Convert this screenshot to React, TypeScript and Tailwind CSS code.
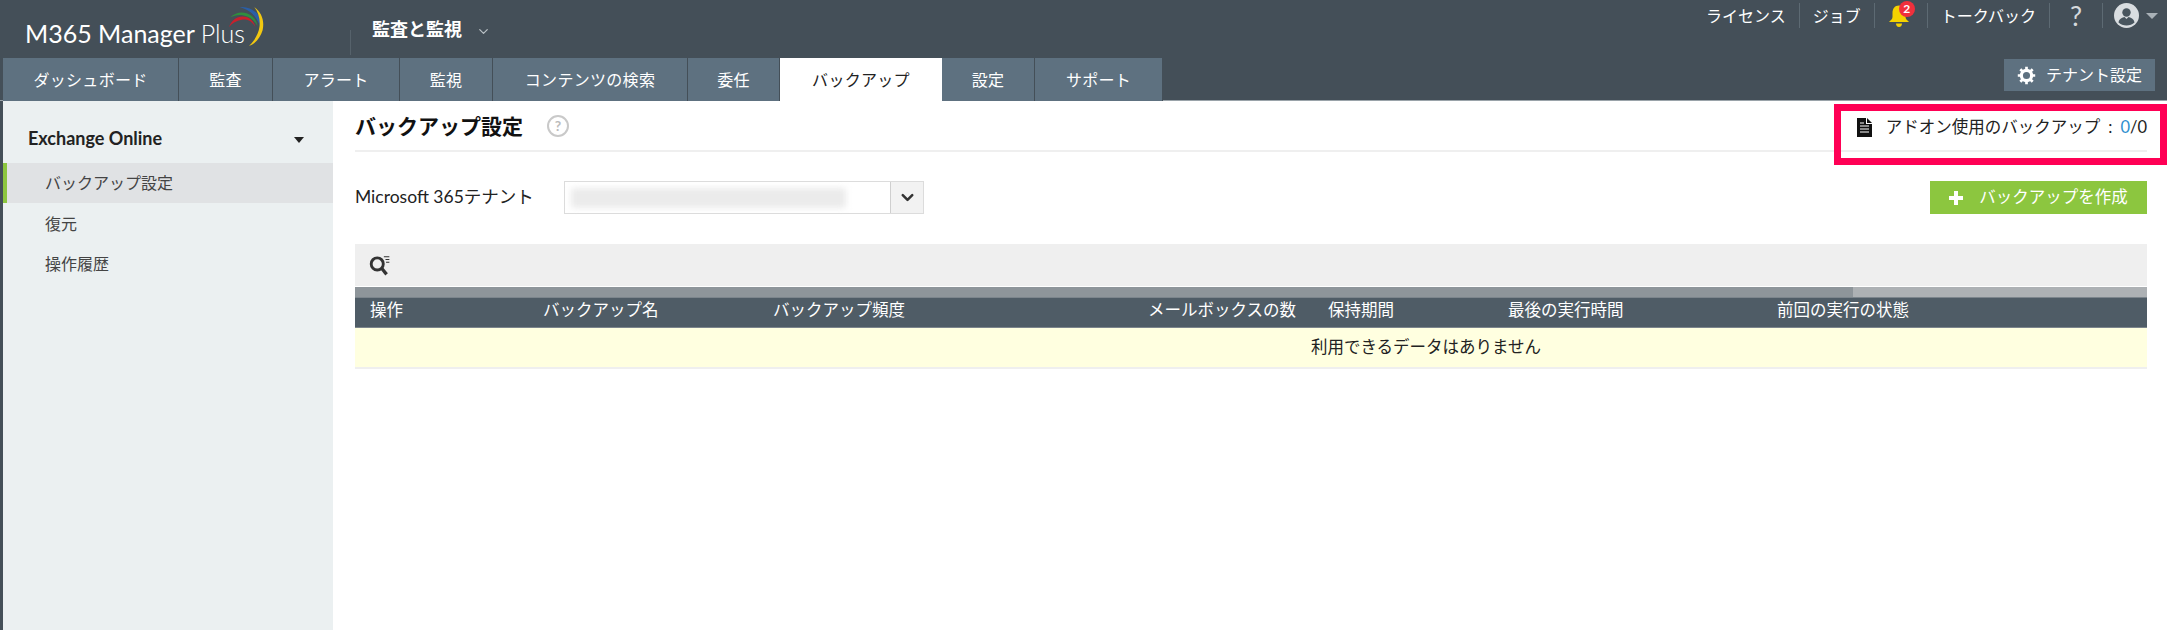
import { ChevronDown } from 'lucide-react';

const FONT = "font-['Lato','Noto_Sans_CJK_JP',sans-serif]";

const tabs = [
  { label: 'ダッシュボード', w: 'w-[176px]' },
  { label: '監査', w: 'w-[94px]' },
  { label: 'アラート', w: 'w-[127px]' },
  { label: '監視', w: 'w-[93px]' },
  { label: 'コンテンツの検索', w: 'w-[195px]' },
  { label: '委任', w: 'w-[92px]' },
  { label: 'バックアップ', w: 'w-[162px]', active: true },
  { label: '設定', w: 'w-[93px]' },
  { label: 'サポート', w: 'w-[128px]' },
];

const columns = [
  '操作',
  'バックアップ名',
  'バックアップ頻度',
  'メールボックスの数',
  '保持期間',
  '最後の実行時間',
  '前回の実行の状態',
];

function LogoArcs() {
  return (
    <svg width="48" height="44" viewBox="0 0 42 42" fill="none" className="absolute left-[225px] top-[5px]">
      <path d="M2 21 C5 12 13 9 20 12 C24 14 26 17 27 21 C24 15 19 13 14 14 C9 15 5 17 2 21Z" fill="#c8202c" />
      <path d="M3 12 C9 6 17 6 23 10 C27 13 29 17 29 20 C26 14 21 11 16 10 C11 9 7 10 3 12Z" fill="#2f8f3e" />
      <path d="M12 2 C20 1 27 5 31 11 C33 15 33 19 32 22 C30 15 26 9 21 6 C18 4 15 3 12 2Z" fill="#2a5fa8" />
      <path d="M26 2 C33 7 36 15 34 24 C32 31 27 37 21 39 C26 34 30 28 31 21 C32 14 30 7 26 2Z" fill="#f2c811" />
    </svg>
  );
}

function Bell() {
  return (
    <svg width="22" height="24" viewBox="0 0 22 24" fill="#f5d200">
      <path d="M11 1.5 C6.5 1.5 4.5 5 4.5 9 L4.5 13 C4.5 15 2.5 16.5 1 18 L21 18 C19.5 16.5 17.5 15 17.5 13 L17.5 9 C17.5 5 15.5 1.5 11 1.5Z" />
      <path d="M8 19.5 L14 19.5 C14 22 12.5 23 11 23 C9.5 23 8 22 8 19.5Z" />
    </svg>
  );
}

function Avatar() {
  return (
    <svg width="25" height="25" viewBox="0 0 25 25">
      <circle cx="12.5" cy="12.5" r="12.5" fill="#d9dde0" />
      <circle cx="12.5" cy="9.5" r="4.2" fill="#48555e" />
      <path d="M4.5 19.5 C5 15.5 8.5 14.5 10.5 14 L12.5 16 L14.5 14 C16.5 14.5 20 15.5 20.5 19.5 C18.5 21.5 15.5 22.5 12.5 22.5 C9.5 22.5 6.5 21.5 4.5 19.5Z" fill="#48555e" />
    </svg>
  );
}

function Gear() {
  return (
    <svg width="19" height="19" viewBox="0 0 24 24" fill="none" stroke="#ffffff">
      <circle cx="12" cy="12" r="6.5" strokeWidth="4" />
      <path d="M12 1v4M12 19v4M1 12h4M19 12h4M4.2 4.2l2.8 2.8M17 17l2.8 2.8M4.2 19.8L7 17M17 7l2.8-2.8" strokeWidth="3.4" />
    </svg>
  );
}

function DocIcon() {
  return (
    <svg width="15" height="19" viewBox="0 0 15 19">
      <path d="M0 0 H9 V6 H15 V19 H0Z" fill="#111111" />
      <path d="M10 0 L15 5 H10Z" fill="#111111" />
      <path d="M3 5h4M3 8h9M3 11h9M3 14h9" stroke="#ffffff" strokeWidth="1" />
    </svg>
  );
}

function SearchIcon() {
  return (
    <svg width="22" height="22" viewBox="0 0 20 20" fill="none" stroke="#333333">
      <circle cx="7.5" cy="9" r="5.5" strokeWidth="2.6" />
      <path d="M11.5 13 L16 18.5" strokeWidth="3" />
      <path d="M13.5 2.5h5M15 5h3.5M15.5 7.5h3" strokeWidth="1.1" />
    </svg>
  );
}

function PlusIcon() {
  return (
    <svg width="14" height="14" viewBox="0 0 14 14" fill="#ffffff">
      <path d="M5 0h4v5h5v4H9v5H5V9H0V5h5Z" />
    </svg>
  );
}

function TopLink({ children, last }: { children: React.ReactNode; last?: boolean }) {
  return (
    <div className={`flex h-[25px] items-center px-[13px] ${last ? '' : 'border-r border-[#5d6a73]'}`}>
      {children}
    </div>
  );
}

export default function App() {
  return (
    <div className={`${FONT} flex h-[630px] w-[2167px] flex-col overflow-hidden bg-white text-[16.5px] text-[#222]`}>
      {/* header */}
      <header className="relative h-[58px] shrink-0 bg-[#444f58]">
        <div className="flex h-full items-start">
          <div className="relative w-[355px] shrink-0 pl-[25px] pt-[18px]">
            <span className="text-[25px] leading-[30px] text-white">
              M365 Manager <span className="font-light">Plus</span>
            </span>
            <LogoArcs />
          </div>
          <div className="ml-[-5px] mt-[30px] h-[25px] border-l border-[#56626b]" />
          <div className="ml-[21px] mt-[16px] flex items-center gap-[14px] text-[18px] font-bold text-white">
            監査と監視
            <ChevronDown size={15} className="mt-[4px] text-[#b9c0c5]" />
          </div>
          <div className="ml-auto mr-[9px] mt-[3px] flex items-center text-[16px] text-white">
            <TopLink>ライセンス</TopLink>
            <TopLink>ジョブ</TopLink>
            <TopLink>
              <div className="relative h-[24px] w-[26px]">
                <Bell />
                <span className="absolute left-[11px] top-[-3px] flex h-[16px] w-[16px] items-center justify-center rounded-full bg-[#f0303c] text-[12px] font-bold leading-none text-white">
                  2
                </span>
              </div>
            </TopLink>
            <TopLink>トークバック</TopLink>
            <TopLink>
              <span className="px-[7px] text-[27px] leading-none text-[#d5d9dc]">?</span>
            </TopLink>
            <div className="flex items-center gap-[7px] pl-[11px]">
              <Avatar />
              <span className="h-0 w-0 border-x-[6px] border-t-[6px] border-x-transparent border-t-[#a9b1b7]" />
            </div>
          </div>
        </div>
      </header>

      {/* tabs */}
      <nav className="flex h-[43px] shrink-0 items-start justify-between border-b border-[#9aa3a9] bg-[#444f58] pl-[3px] pr-[12px]">
        <div className="flex h-[42px]">
          {tabs.map((t) => (
            <div
              key={t.label}
              className={`flex h-[43px] items-center justify-center text-[16px] tracking-[0.3px] ${t.w} ${
                t.active ? 'z-10 bg-white text-[#222]' : 'border-r border-[#444f58] bg-[#5e7180] text-white'
              }`}
            >
              {t.label}
            </div>
          ))}
        </div>
        <div className="mt-[1px] flex h-[32px] w-[151px] items-center justify-center gap-[10px] bg-[#5e7180] text-[16px] text-white">
          <Gear />
          テナント設定
        </div>
      </nav>

      <div className="flex min-h-0 flex-1">
        <div className="w-[3px] shrink-0 bg-[#444f58]" />

        {/* sidebar */}
        <aside className="w-[330px] shrink-0 bg-[#ebf0f1] pt-[17px] text-[16px]">
          <div className="flex h-[40px] items-center justify-between px-[25px]">
            <span className="text-[18px] font-bold text-[#222]">Exchange Online</span>
            <span className="mr-[4px] mt-[4px] h-0 w-0 border-x-[5px] border-t-[6px] border-x-transparent border-t-[#222]" />
          </div>
          <div className="mt-[5px] flex h-[40px] items-center border-l-[4px] border-[#8cc63f] bg-[#e0e2e4] pl-[38px] text-[#444]">
            バックアップ設定
          </div>
          <div className="flex h-[41px] items-center pl-[42px] text-[#444]">復元</div>
          <div className="flex h-[40px] items-center pl-[42px] text-[#444]">操作履歴</div>
        </aside>

        {/* content */}
        <main className="relative min-w-0 flex-1 pl-[22px] pr-[20px]">
          <div className="flex h-[51px] items-center justify-between border-b-2 border-[#efefef]">
            <div className="flex items-center gap-[24px]">
              <h1 className="text-[21px] font-bold leading-none text-[#111]">バックアップ設定</h1>
              <span className="flex h-[22px] w-[22px] items-center justify-center rounded-full border-2 border-[#c9c9c9] text-[14px] font-bold text-[#bbb]">
                ?
              </span>
            </div>
            <div className="mt-[4px] flex items-center gap-[14px]">
              <DocIcon />
              <span>
                アドオン使用のバックアップ<span className="mx-[8px]">:</span>
                <span className="text-[#2f8fd0]">0</span>/0
              </span>
            </div>
          </div>

          <div className="mt-[29px] flex items-center justify-between">
            <div className="flex items-center">
              <span className="w-[209px] text-[17.5px]">Microsoft 365テナント</span>
              <div className="flex h-[33px] w-[360px] border border-[#dcdcdc] bg-white">
                <div className="flex flex-1 items-center px-[6px]">
                  <div className="h-[20px] w-[275px] rounded-[2px] bg-[#ebebeb] blur-[3px]" />
                </div>
                <div className="flex w-[33px] items-center justify-center border-l border-[#cfcfcf] bg-[#f2f2f2]">
                  <ChevronDown size={19} strokeWidth={3.2} className="text-[#333]" />
                </div>
              </div>
            </div>
            <div className="flex h-[33px] w-[217px] items-center justify-center gap-[16px] bg-[#8cc63f] text-white">
              <PlusIcon />
              バックアップを作成
            </div>
          </div>

          <div className="mt-[30px] flex h-[42px] items-center bg-[#efefef] pl-[14px]">
            <SearchIcon />
          </div>
          <div className="mt-[1px] flex h-[10px] bg-[#adb1b4]">
            <div className="h-full w-[1498px] bg-[#8e959a]" />
          </div>
          <div className="grid h-[31px] grid-cols-[173px_230px_375px_180px_180px_269px_1fr] items-center border-y border-y-[#7c858c] bg-[#4f5c66] pb-[10px] pl-[15px] text-white">
            {columns.map((c) => (
              <span key={c}>{c}</span>
            ))}
          </div>
          <div className="flex h-[41px] items-center justify-center border-b-2 border-[#efefef] bg-[#ffffe0] pl-[350px] text-[#222]">
            利用できるデータはありません
          </div>

          {/* highlight drawn over the screenshot */}
          <div className="pointer-events-none absolute right-0 top-[3px] h-[61px] w-[333px] border-[7px] border-[#ff0055]" />
        </main>
      </div>
    </div>
  );
}
